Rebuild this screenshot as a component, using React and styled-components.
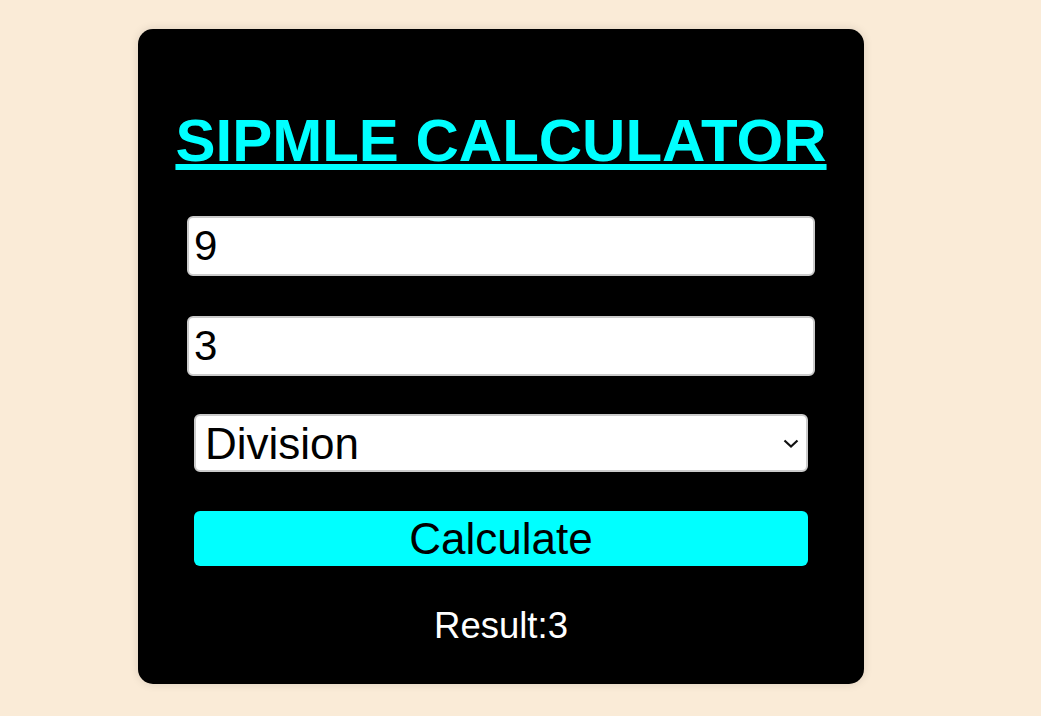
import React, { useState } from "react";
import styled, { createGlobalStyle } from "styled-components";

const GlobalStyle = createGlobalStyle`
  html, body {
    margin: 0;
    background: #faebd7;
    font-family: "Liberation Sans", Arial, sans-serif;
  }
`;

const App = () => {
  const [a, setA] = useState("9");
  const [b, setB] = useState("3");
  const [op, setOp] = useState("div");
  const [result, setResult] = useState(3);

  const calculate = () => {
    const x = parseFloat(a);
    const y = parseFloat(b);
    if (op === "add") setResult(x + y);
    if (op === "sub") setResult(x - y);
    if (op === "mul") setResult(x * y);
    if (op === "div") setResult(x / y);
  };

  return (
    <Page>
      <GlobalStyle />
      <Card>
        <Title>SIPMLE CALCULATOR</Title>
        <NumberInput value={a} onChange={(e) => setA(e.target.value)} />
        <NumberInput value={b} onChange={(e) => setB(e.target.value)} />
        <SelectWrap>
          <Select value={op} onChange={(e) => setOp(e.target.value)}>
            <option value="add">Addition</option>
            <option value="sub">Subtraction</option>
            <option value="mul">Multiplication</option>
            <option value="div">Division</option>
          </Select>
          <Chevron viewBox="0 0 16 9" width="16" height="9">
            <path d="M1.5 1.5 L8 7.5 L14.5 1.5" fill="none" stroke="#111" strokeWidth="2.2" />
          </Chevron>
        </SelectWrap>
        <Button onClick={calculate}>Calculate</Button>
        <Result>Result:{result}</Result>
      </Card>
    </Page>
  );
};

export default App;

const Page = styled.div`
  min-height: 100vh;
  box-sizing: border-box;
  padding: 29px 0 0 138px;
`;

const Card = styled.div`
  width: 726px;
  height: 655px;
  box-sizing: border-box;
  background: #000;
  border-radius: 15px;
  box-shadow: 0 0 10px rgba(0, 0, 0, 0.12);
  padding-top: 77px;
  display: flex;
  flex-direction: column;
  align-items: center;
`;

const Title = styled.h1`
  margin: 0 0 41px;
  color: #00ffff;
  font-size: 60px;
  font-weight: bold;
  line-height: 69px;
  text-decoration: underline;
`;

const NumberInput = styled.input`
  width: 628px;
  height: 60px;
  box-sizing: border-box;
  margin-bottom: 40px;
  padding: 0 5px;
  border: 2px solid #cbcbcb;
  border-radius: 6px;
  background: #fff;
  color: #000;
  font-family: "Liberation Sans", Arial, sans-serif;
  font-size: 42px;
  outline: none;

  &:nth-of-type(2) {
    margin-bottom: 38px;
  }
`;

const SelectWrap = styled.div`
  position: relative;
  margin-bottom: 39px;
`;

const Select = styled.select`
  display: block;
  width: 614px;
  height: 58px;
  box-sizing: border-box;
  padding: 0 9px;
  border: 2px solid #cbcbcb;
  border-radius: 6px;
  background: #fff;
  color: #000;
  font-family: "Liberation Sans", Arial, sans-serif;
  font-size: 44px;
  appearance: none;
  -webkit-appearance: none;
`;

const Chevron = styled.svg`
  position: absolute;
  right: 9px;
  top: 25px;
  pointer-events: none;
`;

const Button = styled.button`
  width: 614px;
  height: 55px;
  margin-bottom: 39px;
  padding: 0;
  border: none;
  border-radius: 6px;
  background: #00ffff;
  color: #000;
  font-family: "Liberation Sans", Arial, sans-serif;
  font-size: 44px;
  cursor: pointer;
`;

const Result = styled.div`
  color: #fff;
  font-size: 36.5px;
  line-height: 41px;
`;
